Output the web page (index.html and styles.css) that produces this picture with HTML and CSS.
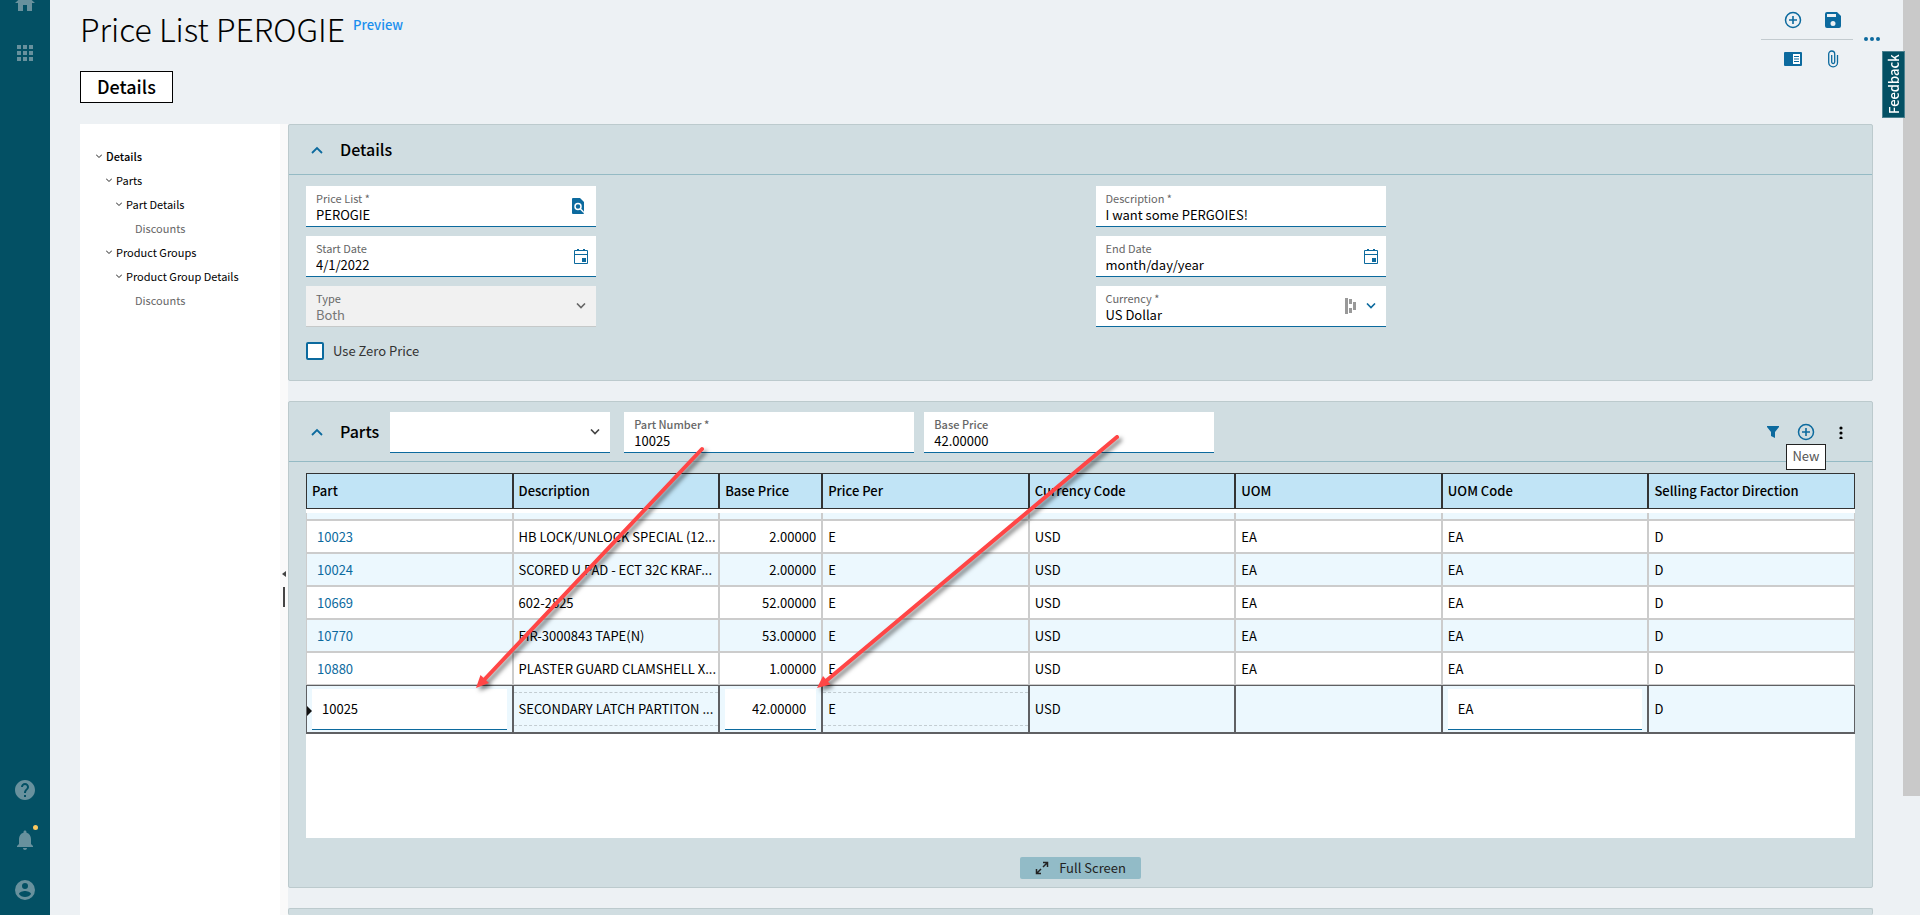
FILE: index.html
```html
<!DOCTYPE html>
<html lang="en">
<head>
    <meta charset="UTF-8">
    <meta name="viewport" content="width=device-width, initial-scale=1.0">
    <title>Price List PEROGIE</title>
    <link rel="stylesheet" href="styles.css">
</head>
<body>
    <nav class="sidebar">
        <div class="side-top">
            <button class="side-btn"><svg width="24" height="24" viewBox="0 0 24 24"><path d="M10 20v-6h4v6h5v-8h3L12 3 2 12h3v8z"/></svg></button>
            <button class="side-btn"><svg width="24" height="24" viewBox="0 0 24 24"><path d="M4 8h4V4H4v4zm6 12h4v-4h-4v4zm-6 0h4v-4H4v4zm0-6h4v-4H4v4zm6 0h4v-4h-4v4zm6-10v4h4V4h-4zm-6 4h4V4h-4v4zm6 6h4v-4h-4v4zm0 6h4v-4h-4v4z"/></svg></button>
        </div>
        <div class="side-bottom">
            <button class="side-btn"><svg width="24" height="24" viewBox="0 0 24 24"><path d="M12 2C6.48 2 2 6.48 2 12s4.48 10 10 10 10-4.48 10-10S17.52 2 12 2zm1 17h-2v-2h2v2zm2.07-7.75l-.9.92C13.45 12.9 13 13.5 13 15h-2v-.5c0-1.1.45-2.1 1.17-2.83l1.24-1.26c.37-.36.59-.86.59-1.41 0-1.1-.9-2-2-2s-2 .9-2 2H8c0-2.21 1.79-4 4-4s4 1.79 4 4c0 .88-.36 1.68-.93 2.25z"/></svg></button>
            <button class="side-btn"><svg width="24" height="24" viewBox="0 0 24 24"><path d="M12 22c1.1 0 2-.9 2-2h-4c0 1.1.89 2 2 2zm6-6v-5c0-3.07-1.64-5.64-4.5-6.32V4c0-.83-.67-1.500-1.500-1.500s-1.500.67-1.500 1.500v.68C7.630 5.360 6 7.920 6 11v5l-2 2v1h16v-1l-2-2z"/></svg><span class="alert-dot"></span></button>
            <button class="side-btn"><svg width="24" height="24" viewBox="0 0 24 24"><path fill-rule="evenodd" d="M12 2a10 10 0 1 0 0 20 10 10 0 0 0 0-20zm0 3a3 3 0 1 1 0 6 3 3 0 0 1 0-6zm0 14c-2.600 0-4.900-1.200-6-3 0-2 4-3 6-3s6 1 6 3c-1.100 1.800-3.400 3-6 3z"/></svg></button>
        </div>
    </nav>

    <main class="page">
        <header class="page-header">
            <h1>Price List PEROGIE</h1>
            <a class="preview" href="#">Preview</a>
            <div class="toolbar">
                <div class="tool-grid">
                    <button class="icon-btn"><svg width="18" height="18" viewBox="0 0 18 18"><circle cx="9" cy="9" r="7.500" fill="none" stroke="#0c6a9e" stroke-width="1.500"/><path d="M9 5v8M5 9h8" stroke="#0c6a9e" stroke-width="1.600"/></svg></button>
                    <button class="icon-btn"><svg width="18" height="18" viewBox="0 0 18 18"><path fill="#0c6a9e" fill-rule="evenodd" d="M3 1h10l4 4v10a2 2 0 0 1-2 2H3a2 2 0 0 1-2-2V3a2 2 0 0 1 2-2zm0 2v3h9V3zm6 7a2.500 2.500 0 1 0 0 5 2.500 2.500 0 0 0 0-5z"/></svg></button>
                    <button class="icon-btn"><svg width="20" height="16" viewBox="0 0 20 16"><rect x="1" y="1" width="18" height="14" rx="1" fill="#0c6a9e"/><path fill="#fff" d="M10 3h7v10h-7z"/><path d="M11 5.500h5M11 8h5M11 10.500h5" stroke="#0c6a9e" stroke-width="1.200"/></svg></button>
                    <button class="icon-btn"><svg width="12" height="18" viewBox="0 0 12 18"><path fill="none" stroke="#0c6a9e" stroke-width="1.300" d="M10.500 5v7.500a4.400 4.400 0 0 1-8.800 0V4a3 3 0 0 1 6 0v8a1.500 1.500 0 0 1-3 0V5"/></svg></button>
                </div>
                <button class="icon-btn"><svg width="18" height="6" viewBox="0 0 18 6"><g fill="#0c6a9e"><circle cx="3" cy="3" r="2"/><circle cx="9" cy="3" r="2"/><circle cx="15" cy="3" r="2"/></g></svg></button>
            </div>
        </header>

        <button class="tab">Details</button>

        <div class="columns">
            <aside class="outline">
                <ul>
                    <li class="level-1"><svg width="6" height="4" viewBox="0 0 6 4"><path d="M0 .5l3 3 3-3"/></svg>Details</li>
                    <li class="level-2"><svg width="6" height="4" viewBox="0 0 6 4"><path d="M0 .5l3 3 3-3"/></svg>Parts</li>
                    <li class="level-3"><svg width="6" height="4" viewBox="0 0 6 4"><path d="M0 .5l3 3 3-3"/></svg>Part Details</li>
                    <li class="level-4">Discounts</li>
                    <li class="level-2"><svg width="6" height="4" viewBox="0 0 6 4"><path d="M0 .5l3 3 3-3"/></svg>Product Groups</li>
                    <li class="level-3"><svg width="6" height="4" viewBox="0 0 6 4"><path d="M0 .5l3 3 3-3"/></svg>Product Group Details</li>
                    <li class="level-4">Discounts</li>
                </ul>
            </aside>
            <div class="splitter">
                <svg width="4" height="6" viewBox="0 0 4 6"><path d="M4 0v6L0 3z" fill="#444"/></svg>
                <span class="grip"></span>
            </div>

            <div class="cards">
                <section class="card">
                    <div class="card-header">
                        <button class="icon-btn collapse"><svg width="12" height="8" viewBox="0 0 12 8"><path d="M1 7l5-5 5 5" fill="none" stroke="#0c6a9e" stroke-width="1.800"/></svg></button>
                        <h2>Details</h2>
                    </div>
                    <div class="form">
                        <div class="field">
                            <div class="field-text">
                                <label for="price-list">Price List *</label>
                                <input id="price-list" type="text" value="PEROGIE">
                            </div>
                            <button class="icon-btn search-btn"><svg width="12" height="16" viewBox="0 0 12 16"><path fill="#0c6a9e" d="M1 0h7l4 4v11a1 1 0 0 1-1 1H1a1 1 0 0 1-1-1V1a1 1 0 0 1 1-1z"/><circle cx="6" cy="8.500" r="3" fill="none" stroke="#fff" stroke-width="1.500"/><path d="M8 10.500l4 4" stroke="#fff" stroke-width="1.500"/></svg></button>
                        </div>
                        <div class="field">
                            <div class="field-text">
                                <label for="description">Description *</label>
                                <input id="description" type="text" value="I want some PERGOIES!">
                            </div>
                        </div>
                        <div class="field">
                            <div class="field-text">
                                <label for="start-date">Start Date</label>
                                <input id="start-date" type="text" value="4/1/2022">
                            </div>
                            <button class="icon-btn"><svg width="14" height="16" viewBox="0 0 14 16"><path d="M.5 2.500h13v13H.5zM.5 6.500h13" fill="none" stroke="#0c6a9e"/><path fill="#0c6a9e" d="M3 1h2v2H3zM9 1h2v2H9zM8 10h4v4H8z"/></svg></button>
                        </div>
                        <div class="field">
                            <div class="field-text">
                                <label for="end-date">End Date</label>
                                <input id="end-date" type="text" value="month/day/year">
                            </div>
                            <button class="icon-btn"><svg width="14" height="16" viewBox="0 0 14 16"><path d="M.5 2.500h13v13H.5zM.5 6.500h13" fill="none" stroke="#0c6a9e"/><path fill="#0c6a9e" d="M3 1h2v2H3zM9 1h2v2H9zM8 10h4v4H8z"/></svg></button>
                        </div>
                        <div class="field disabled">
                            <div class="field-text">
                                <label for="type">Type</label>
                                <select id="type" disabled><option>Both</option></select>
                            </div>
                            <svg class="chevron" width="10" height="6" viewBox="0 0 10 6"><path d="M1 .5l4 4 4-4" stroke="#666"/></svg>
                        </div>
                        <div class="field">
                            <div class="field-text">
                                <label for="currency">Currency *</label>
                                <select id="currency"><option>US Dollar</option></select>
                            </div>
                            <svg class="bars" width="12" height="16" viewBox="0 0 12 16"><path fill="#999" d="M0 0h3v16H0zM4 1h3v5H4zM4 10h3v5H4zM8 4h3v8H8z"/></svg>
                            <svg class="chevron" width="10" height="6" viewBox="0 0 10 6"><path d="M1 .5l4 4 4-4" stroke="#0c6a9e"/></svg>
                        </div>
                        <div class="check">
                            <input id="zero-price" type="checkbox">
                            <label for="zero-price">Use Zero Price</label>
                        </div>
                    </div>
                </section>

                <section class="card">
                    <div class="card-header parts-header">
                        <button class="icon-btn collapse"><svg width="12" height="8" viewBox="0 0 12 8"><path d="M1 7l5-5 5 5" fill="none" stroke="#0c6a9e" stroke-width="1.800"/></svg></button>
                        <h2>Parts</h2>
                        <div class="field part-view">
                            <div class="field-text">
                                <select aria-label="View"><option></option></select>
                            </div>
                            <svg class="chevron" width="10" height="6" viewBox="0 0 10 6"><path d="M1 .5l4 4 4-4" stroke="#444"/></svg>
                        </div>
                        <div class="field">
                            <div class="field-text">
                                <label for="part-number">Part Number *</label>
                                <input id="part-number" type="text" value="10025">
                            </div>
                        </div>
                        <div class="field">
                            <div class="field-text">
                                <label for="base-price">Base Price</label>
                                <input id="base-price" type="text" value="42.00000">
                            </div>
                        </div>
                        <div class="card-tools">
                            <button class="icon-btn"><svg width="12" height="14" viewBox="0 0 12 14"><path fill="#0c6a9e" d="M0 1h12v1L8 7v6l-4-2V7L0 2z"/></svg></button>
                            <button class="icon-btn"><svg width="18" height="18" viewBox="0 0 18 18"><circle cx="9" cy="9" r="7.500" fill="none" stroke="#0c6a9e" stroke-width="1.500"/><path d="M9 5v8M5 9h8" stroke="#0c6a9e" stroke-width="1.600"/></svg><span class="tooltip">New</span></button>
                            <button class="icon-btn"><svg width="4" height="14" viewBox="0 0 4 14"><g fill="#000"><circle cx="2" cy="3" r="1.600"/><circle cx="2" cy="8" r="1.600"/><circle cx="2" cy="13" r="1.600"/></g></svg></button>
                        </div>
                    </div>

                    <div class="grid-box">
                        <table class="grid">
                            <colgroup>
                                <col><col><col class="narrow"><col><col><col><col><col>
                            </colgroup>
                            <thead>
                                <tr><th>Part</th><th>Description</th><th>Base Price</th><th>Price Per</th><th>Currency Code</th><th>UOM</th><th>UOM Code</th><th>Selling Factor Direction</th></tr>
                            </thead>
                            <tbody>
                                <tr class="gap-row"><td colspan="8"></td></tr>
                                <tr class="cut-row"><td></td><td></td><td></td><td></td><td></td><td></td><td></td><td></td></tr>
                                <tr><td class="part"><a href="#">10023</a></td><td>HB LOCK/UNLOCK SPECIAL (12...</td><td class="num">2.00000</td><td>E</td><td>USD</td><td>EA</td><td>EA</td><td>D</td></tr>
                                <tr class="alt"><td class="part"><a href="#">10024</a></td><td>SCORED U PAD - ECT 32C KRAF...</td><td class="num">2.00000</td><td>E</td><td>USD</td><td>EA</td><td>EA</td><td>D</td></tr>
                                <tr><td class="part"><a href="#">10669</a></td><td>602-2825</td><td class="num">52.00000</td><td>E</td><td>USD</td><td>EA</td><td>EA</td><td>D</td></tr>
                                <tr class="alt"><td class="part"><a href="#">10770</a></td><td>FIR-3000843 TAPE(N)</td><td class="num">53.00000</td><td>E</td><td>USD</td><td>EA</td><td>EA</td><td>D</td></tr>
                                <tr><td class="part"><a href="#">10880</a></td><td>PLASTER GUARD CLAMSHELL X...</td><td class="num">1.00000</td><td>E</td><td>USD</td><td>EA</td><td>EA</td><td>D</td></tr>
                                <tr class="edit-row">
                                    <td class="current"><input type="text" aria-label="Part" value="10025"></td>
                                    <td class="dashed"><div>SECONDARY LATCH PARTITON ...</div></td>
                                    <td><input class="num" type="text" aria-label="Base Price" value="42.00000"></td>
                                    <td class="dashed"><div>E</div></td>
                                    <td>USD</td>
                                    <td></td>
                                    <td><input type="text" aria-label="UOM Code" value="EA"></td>
                                    <td>D</td>
                                </tr>
                            </tbody>
                        </table>
                    </div>
                    <button class="full-screen"><svg width="14" height="14" viewBox="0 0 14 14"><path d="M8 6l4-4M8 1.500h4.500V6M6 8l-4 4M1.500 8v4.500H6" fill="none" stroke="#222" stroke-width="1.500"/></svg>Full Screen</button>
                </section>

                <section class="card"></section>
            </div>
        </div>
    </main>

    <button class="feedback">Feedback</button>
    <div class="scroll-track"><div class="scroll-thumb"></div></div>

    <!-- red arrows pointing from the header fields to the new row -->
    <svg class="arrows" width="1200" height="800" viewBox="0 0 1200 800">
        <g stroke="#ff4646" stroke-width="4" stroke-linecap="round">
            <path d="M702 449L484 680"/>
            <path d="M1117 437L826 681"/>
        </g>
        <g fill="#ff4646">
            <path d="M476 688L480.500 675 489 683z"/>
            <path d="M817 688L823 676 830.500 684.500z"/>
        </g>
    </svg>
</body>
</html>
```
FILE: styles.css
```css
*{
    box-sizing: border-box;
}
body{
    margin: 0;
    height: 100vh;
    display: flex;
    overflow: hidden;
    position: relative;
    background-color: #edf1f4;
    color: #000;
    font-family: "Noto Sans CJK SC", "Open Sans", sans-serif;
    font-size: 13px;
    line-height: 16px;
}
h1, h2, ul{
    margin: 0;
    padding: 0;
    list-style: none;
}
button, input, select{
    font: inherit;
    color: inherit;
    margin: 0;
    padding: 0;
    border: none;
    border-radius: 0;
    background: none;
}
svg{
    display: block;
    flex: none;
}
a{
    color: #0c6a9e;
    text-decoration: none;
}

.sidebar{
    width: 50px;
    flex: none;
    display: flex;
    flex-direction: column;
    justify-content: space-between;
    background-color: #035064;
}
.side-top{
    margin-top: -22px;
}
.side-btn{
    position: relative;
    width: 50px;
    height: 50px;
    display: flex;
    align-items: center;
    justify-content: center;
    fill: #68919d;
}
.alert-dot{
    position: absolute;
    top: 10px;
    right: 12px;
    width: 5px;
    height: 5px;
    border-radius: 50%;
    background-color: #fbc95f;
}

.page{
    flex: 1;
    min-width: 0;
    display: flex;
    flex-direction: column;
    padding: 0 30px;
}
.page-header{
    display: flex;
    align-items: flex-start;
    height: 71px;
}
h1{
    font-size: 32px;
    font-weight: 300;
    line-height: 56px;
}
.preview{
    margin: 17px 0 0 8px;
    font-weight: 500;
    color: #1a8fee;
}
.toolbar{
    display: flex;
    align-items: center;
    gap: 10px;
    margin-left: auto;
    margin-right: -8px;
}
.tool-grid{
    display: grid;
    grid-template-columns: 40px 40px;
    padding-left: 12px;
    justify-items: center;
    align-items: center;
    grid-template-rows: 39px 39px;
    background: linear-gradient(#c3cbcf, #c3cbcf) center / 100% 1px no-repeat;
}
.icon-btn{
    display: flex;
    align-items: center;
    justify-content: center;
    position: relative;
}
.tab{
    align-self: flex-start;
    height: 32px;
    padding: 0 16px 2px;
    border: 1px solid #000;
    background-color: #fff;
    font-size: 18px;
    font-weight: 500;
}

.columns{
    flex: 1;
    display: flex;
    margin-top: 21px;
}
.outline{
    width: 200px;
    flex: none;
    padding: 20px 16px;
    background-color: #fff;
    font-size: 11px;
}
.outline li{
    display: flex;
    align-items: center;
    gap: 4px;
    height: 24px;
}
.outline path{
    fill: none;
    stroke: #222;
}
.outline .level-1{
    font-weight: 500;
}
.outline .level-2{
    padding-left: 10px;
}
.outline .level-3{
    padding-left: 20px;
}
.outline .level-4{
    padding-left: 39px;
    color: #666;
}
.splitter{
    width: 8px;
    flex: none;
    display: flex;
    flex-direction: column;
    align-items: center;
    justify-content: center;
    gap: 10px;
    padding-top: 138px;
    background-color: #fafafa;
}
.grip{
    width: 2px;
    height: 20px;
    background-color: #444;
}

.cards{
    flex: 1;
    min-width: 0;
    display: flex;
    flex-direction: column;
    gap: 20px;
}
.card{
    border: 1px solid #bccacd;
    border-radius: 2px;
    background-color: #d0dde1;
}
.card:last-child{
    flex: 1;
    border-bottom: none;
}
.card-header{
    display: flex;
    align-items: center;
    height: 50px;
    padding: 0 22px;
    border-bottom: 1px solid #94bac4;
}
.collapse{
    margin-right: 17px;
}
h2{
    padding-bottom: 2px;
    font-size: 16px;
    font-weight: 500;
}
.form{
    display: grid;
    grid-template-columns: 1fr 1fr;
    gap: 9px 30px;
    padding: 11px 17px 15px;
}
.field{
    display: flex;
    align-items: center;
    width: 290px;
    height: 41px;
    padding: 0 8px 0 10px;
    border-bottom: 1px solid #0c6a9e;
    background-color: #fff;
}
.field-text{
    flex: 1;
    min-width: 0;
    display: flex;
    flex-direction: column;
    gap: 1px;
}
.field label{
    font-size: 11px;
    color: #666;
}
.field input, .field select{
    width: 100%;
    height: 16px;
    appearance: none;
    outline: none;
}
.search-btn{
    margin-right: 4px;
}
.chevron{
    margin-right: 2px;
}
.chevron path{
    fill: none;
    stroke-width: 1.6;
}
.bars{
    margin-right: 9px;
}
.disabled{
    background-color: #f1f1f1;
    border-bottom-color: #c6c9c9;
}
.disabled select{
    color: #777;
    opacity: 1;
}
.check{
    display: flex;
    align-items: center;
    gap: 9px;
    height: 29px;
    color: #333;
}
.check input{
    width: 18px;
    height: 18px;
    appearance: none;
    border: 2px solid #0c6a9e;
    border-radius: 2px;
    background-color: #fff;
}

.parts-header{
    height: 60px;
}
.parts-header .field{
    margin-top: 2px;
    margin-right: 10px;
}
.parts-header .part-view{
    width: 220px;
    margin-left: 11px;
    margin-right: 14px;
}
.parts-header label{
    font-weight: 500;
}
.card-tools{
    display: flex;
    align-items: center;
    gap: 18px;
    margin-left: auto;
    margin-right: 7px;
}
.card-tools .icon-btn:last-child{
    margin-left: 6px;
}
.tooltip{
    position: absolute;
    top: 21px;
    left: -11px;
    width: 40px;
    padding: 3px 0 5px;
    border: 1px solid #222;
    background-color: #fff;
    color: #555;
    z-index: 2;
}

.grid-box{
    height: 365px;
    margin: 11px 17px 0;
    background-color: #fff;
}
.grid{
    width: 100%;
    table-layout: fixed;
    border-collapse: separate;
    border-spacing: 0;
}
.grid .narrow{
    width: 103px;
}
.grid th{
    height: 36px;
    padding: 0 5px;
    border: 1px solid #333;
    background-color: #c1e4f6;
    font-weight: 500;
    text-align: left;
}
.grid td{
    height: 33px;
    padding: 0 5px;
    border: 1px solid #ccc;
    white-space: nowrap;
    overflow: hidden;
}
.grid .part{
    padding-left: 10px;
}
.grid .num{
    text-align: right;
}
.grid .alt td{
    background-color: #ecf8fe;
}
.grid .gap-row td{
    height: 4px;
    padding: 0;
    border: none;
}
.grid .cut-row td{
    height: 7px;
    padding: 0;
    border-top: none;
    background-color: #ecf8fe;
}
.grid .edit-row td{
    height: 49px;
    border-color: #5f6063;
    border-bottom-width: 2px;
    background-color: #ecf8fe;
}
.edit-row input{
    display: block;
    width: 100%;
    height: 41px;
    padding: 0 10px;
    border-bottom: 1px solid #0c6a9e;
    background-color: #fff;
}
.grid .dashed{
    padding: 0;
}
.dashed div{
    padding: 8px 5px;
    border: dashed #c3cdd2;
    border-width: 1px 0;
}
.grid .current{
    position: relative;
}
.current::before{
    content: "";
    position: absolute;
    left: 0;
    top: 20px;
    border: 5px solid transparent;
    border-left-color: #111;
    border-right: none;
}
.full-screen{
    display: flex;
    align-items: center;
    gap: 10px;
    height: 22px;
    margin: 19px auto 8px;
    padding: 0 15px 1px;
    border-radius: 2px;
    background-color: #92bbc7;
    color: #222;
}

.feedback{
    position: absolute;
    top: 51px;
    right: 15px;
    width: 23px;
    height: 67px;
    border: 1px solid #4c8290;
    background-color: #035064;
    color: #fff;
    font-weight: 500;
    writing-mode: vertical-rl;
    transform: rotate(180deg);
    z-index: 1;
}
.scroll-track{
    width: 17px;
    flex: none;
}
.scroll-thumb{
    height: 87%;
    background-color: #c9c9c9;
}
.arrows{
    position: absolute;
    top: 0;
    left: 0;
    pointer-events: none;
    fill: none;
    filter: drop-shadow(3px 3px 2px rgba(0, 0, 0, 0.5));
}
```
